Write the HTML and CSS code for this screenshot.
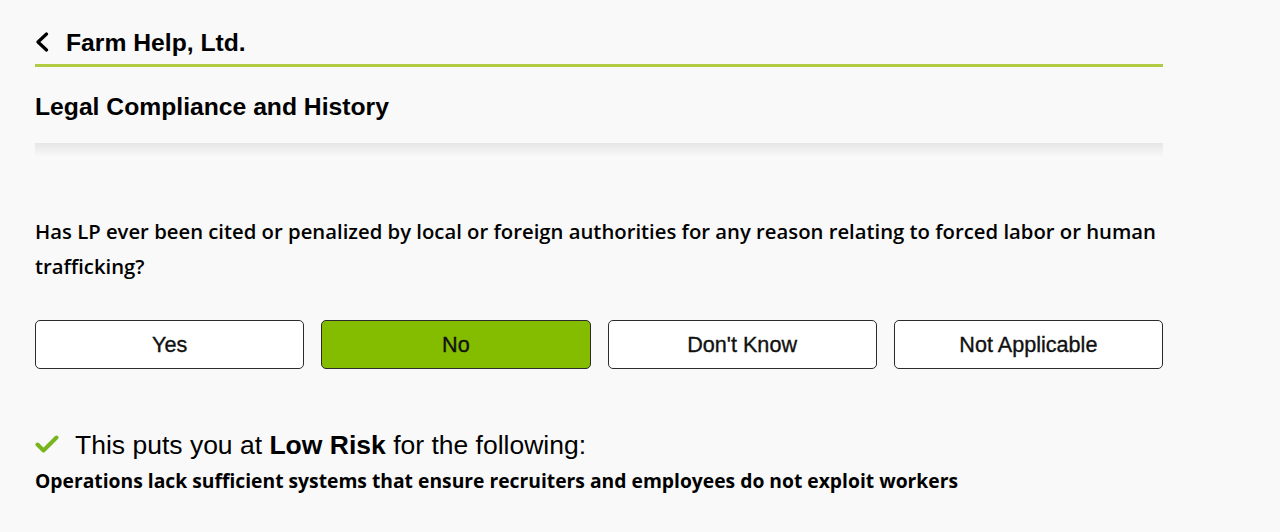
FILE: index.html
```html
<!DOCTYPE html>
<html lang="en">
<head>
<meta charset="utf-8">
<title>Farm Help, Ltd.</title>
<link rel="stylesheet" href="styles.css">
</head>
<body>
<div class="page">
  <header class="topbar">
    <svg class="back" width="14" height="20" viewBox="0 0 14 20" aria-hidden="true">
      <polyline points="11.5,2 3,10 11.5,18" fill="none" stroke="#000" stroke-width="3.2" stroke-linecap="round" stroke-linejoin="round"/>
    </svg>
    <h1 class="company">Farm Help, Ltd.</h1>
  </header>
  <h2 class="section-title">Legal Compliance and History</h2>
  <div class="fade"></div>
  <p class="question">Has LP ever been cited or penalized by local or foreign authorities for any reason relating to forced labor or human trafficking?</p>
  <div class="options">
    <button class="option">Yes</button>
    <button class="option selected">No</button>
    <button class="option">Don't Know</button>
    <button class="option">Not Applicable</button>
  </div>
  <div class="result">
    <svg class="check" width="24" height="18" viewBox="0 0 24 18" aria-hidden="true">
      <polyline points="2.5,9.5 8.5,15.5 21.5,2.5" fill="none" stroke="#78b51e" stroke-width="4" stroke-linecap="round" stroke-linejoin="round"/>
    </svg>
    <span>This puts you at <b>Low Risk</b> for the following:</span>
  </div>
  <p class="risk">Operations lack sufficient systems that ensure recruiters and employees do not exploit workers</p>
</div>
</body>
</html>
```

FILE: styles.css
```css
html, body {
  margin: 0;
  padding: 0;
  background: #f9f9f9;
}

body {
  color: #000;
  font-family: "Liberation Sans", Arial, sans-serif;
}

.page {
  width: 1128px;
  padding-left: 35px;
}

.topbar {
  display: flex;
  align-items: center;
  gap: 17px;
  height: 42px;
  padding-top: 22px;
  border-bottom: 3px solid #b1cb43;
}

.back {
  display: block;
  margin-top: -2px;
}

.company {
  margin: 0;
  font-size: 24.7px;
  font-weight: 700;
  line-height: 42px;
}

.section-title {
  margin: 0;
  height: 76px;
  padding-top: 3px;
  box-sizing: border-box;
  display: flex;
  align-items: center;
  font-size: 24.7px;
  font-weight: 700;
}

.fade {
  height: 14px;
  background: linear-gradient(#e6e6e6, #f9f9f9);
}

.question {
  margin: 57px 0 0;
  font-family: "Open Sans", sans-serif;
  font-weight: 600;
  font-size: 20.3px;
  line-height: 35px;
}

.options {
  display: grid;
  grid-template-columns: repeat(4, 1fr);
  column-gap: 17px;
  margin-top: 36px;
}

.option {
  height: 49px;
  border: 1px solid #2b2b2b;
  border-radius: 5px;
  background: #fff;
  color: #111;
  font-family: "Liberation Sans", Arial, sans-serif;
  font-size: 21.6px;
  font-weight: 400;
  -webkit-text-stroke: 0.35px #111;
  padding: 0;
}

.option.selected {
  background: #84bd00;
}

.result {
  display: flex;
  align-items: center;
  gap: 16px;
  margin-top: 61px;
  height: 30px;
  font-size: 26.5px;
}

.check {
  display: block;
  margin-top: -2px;
}

.risk {
  margin: 6px 0 0;
  font-family: "Open Sans", sans-serif;
  font-weight: 700;
  font-size: 19.3px;
  line-height: 30px;
}
```
